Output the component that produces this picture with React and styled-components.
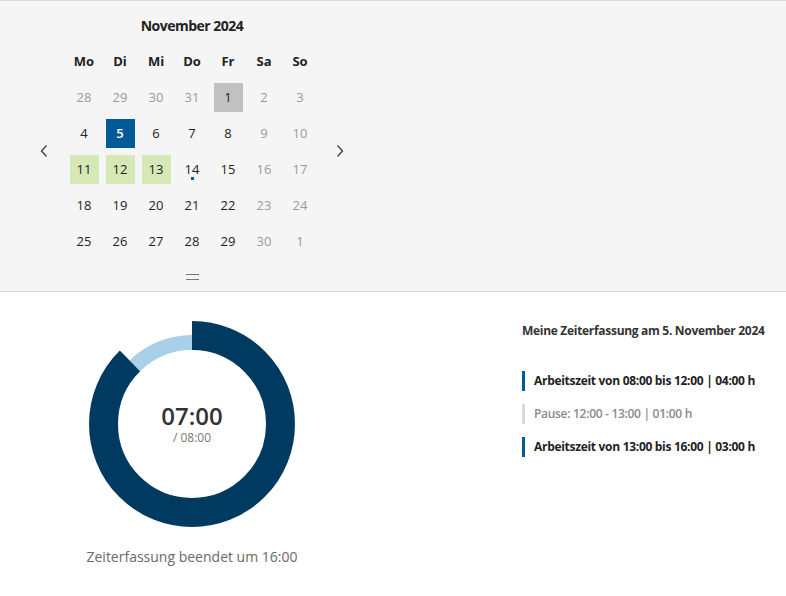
import React from 'react';
import styled, { createGlobalStyle } from 'styled-components';

const GlobalStyle = createGlobalStyle`
  html, body { margin: 0; padding: 0; background: #fff; }
  body { font-family: "Open Sans", "Noto Sans", sans-serif; color: #222; }
`;

const WEEKDAYS = ['Mo', 'Di', 'Mi', 'Do', 'Fr', 'Sa', 'So'];

// each day: [label, kind, mark] where kind is muted / normal and mark a highlight
const WEEKS = [
  [['28', 'muted'], ['29', 'muted'], ['30', 'muted'], ['31', 'muted'], ['1', 'normal', 'gray'], ['2', 'muted'], ['3', 'muted']],
  [['4', 'normal'], ['5', 'normal', 'selected'], ['6', 'normal'], ['7', 'normal'], ['8', 'normal'], ['9', 'muted'], ['10', 'muted']],
  [['11', 'normal', 'green'], ['12', 'normal', 'green'], ['13', 'normal', 'green'], ['14', 'normal', 'dot'], ['15', 'normal'], ['16', 'muted'], ['17', 'muted']],
  [['18', 'normal'], ['19', 'normal'], ['20', 'normal'], ['21', 'normal'], ['22', 'normal'], ['23', 'muted'], ['24', 'muted']],
  [['25', 'normal'], ['26', 'normal'], ['27', 'normal'], ['28', 'normal'], ['29', 'normal'], ['30', 'muted'], ['1', 'muted']],
];

const ENTRIES = [
  { text: 'Arbeitszeit von 08:00 bis 12:00 | 04:00 h', pause: false },
  { text: 'Pause: 12:00 - 13:00 | 01:00 h', pause: true },
  { text: 'Arbeitszeit von 13:00 bis 16:00 | 03:00 h', pause: false },
];

const Chevron = ({ dir }) => (
  <svg width="10" height="14" viewBox="0 0 10 14">
    <path
      d={dir === 'left' ? 'M7.5 1.5 L2.5 7 L7.5 12.5' : 'M2.5 1.5 L7.5 7 L2.5 12.5'}
      fill="none"
      stroke="#444"
      strokeWidth="1.4"
    />
  </svg>
);

const Donut = () => {
  const rDark = 88.5;
  const cDark = 2 * Math.PI * rDark;
  const rLight = 81.5;
  const cLight = 2 * Math.PI * rLight;
  return (
    <svg width="206" height="206" viewBox="0 0 206 206">
      <g transform="rotate(-90 103 103)">
        <circle
          cx="103" cy="103" r={rLight}
          fill="none" stroke="#a8d1e9" strokeWidth="15"
          strokeDasharray={`${cLight / 8} ${cLight}`}
          strokeDashoffset={-(cLight * 7) / 8}
        />
        <circle
          cx="103" cy="103" r={rDark}
          fill="none" stroke="#003a60" strokeWidth="29"
          strokeDasharray={`${(cDark * 7) / 8} ${cDark}`}
        />
      </g>
    </svg>
  );
};

export default function App() {
  return (
    <Page>
      <GlobalStyle />
      <CalendarPanel>
        <CalendarColumn>
          <MonthTitle>November 2024</MonthTitle>
          <CalendarRow>
            <NavButton aria-label="Vorheriger Monat"><Chevron dir="left" /></NavButton>
            <Grid>
              {WEEKDAYS.map((d) => (
                <WeekdayCell key={d}>{d}</WeekdayCell>
              ))}
              {WEEKS.flat().map(([label, kind, mark], i) => (
                <DayCell key={i}>
                  <DayBox $kind={kind} $mark={mark}>
                    {label}
                    {mark === 'dot' && <Dot />}
                  </DayBox>
                </DayCell>
              ))}
            </Grid>
            <NavButton aria-label="Nächster Monat"><Chevron dir="right" /></NavButton>
          </CalendarRow>
          <Handle />
        </CalendarColumn>
      </CalendarPanel>

      <Summary>
        <ChartColumn>
          <ChartWrap>
            <Donut />
            <ChartCenter>
              <Worked>07:00</Worked>
              <Target>/ 08:00</Target>
            </ChartCenter>
          </ChartWrap>
          <Caption>Zeiterfassung beendet um 16:00</Caption>
        </ChartColumn>

        <EntryColumn>
          <EntryTitle>Meine Zeiterfassung am 5. November 2024</EntryTitle>
          <EntryList>
            {ENTRIES.map((e) => (
              <Entry key={e.text} $pause={e.pause}>{e.text}</Entry>
            ))}
          </EntryList>
        </EntryColumn>
      </Summary>
    </Page>
  );
}

const Page = styled.div`
  width: 786px;
  min-height: 596px;
  display: flex;
  flex-direction: column;
`;

const CalendarPanel = styled.section`
  background: #f5f5f5;
  border-top: 1px solid #dcdcdc;
  border-bottom: 1px solid #d6d6d6;
  height: 290px;
`;

const CalendarColumn = styled.div`
  width: 384px;
  display: flex;
  flex-direction: column;
  align-items: center;
`;

const MonthTitle = styled.div`
  font-size: 14px;
  font-weight: 700;
  letter-spacing: -0.5px;
  color: #222;
  line-height: 20px;
  margin-top: 15px;
  height: 27px;
`;

const CalendarRow = styled.div`
  display: flex;
  align-items: center;
  gap: 10px;
`;

const NavButton = styled.button`
  width: 24px;
  height: 24px;
  border: none;
  background: transparent;
  padding: 0;
  display: flex;
  align-items: center;
  justify-content: center;
  cursor: pointer;
`;

const Grid = styled.div`
  display: grid;
  grid-template-columns: repeat(7, 36px);
  grid-auto-rows: 36px;
`;

const WeekdayCell = styled.div`
  display: flex;
  align-items: center;
  justify-content: center;
  font-size: 13px;
  font-weight: 700;
  color: #222;
`;

const DayCell = styled.div`
  display: flex;
  align-items: center;
  justify-content: center;
`;

const markBg = {
  gray: '#c1c1c1',
  selected: '#005a97',
  green: '#d5e8b5',
};

const DayBox = styled.div`
  position: relative;
  width: 29px;
  height: 29px;
  display: flex;
  align-items: center;
  justify-content: center;
  font-size: 13px;
  background: ${(p) => markBg[p.$mark] || 'transparent'};
  color: ${(p) => (p.$mark === 'selected' ? '#fff' : p.$kind === 'muted' ? '#9a9a9a' : '#222')};
  font-weight: ${(p) => (p.$mark === 'selected' ? 600 : 400)};
`;

const Dot = styled.span`
  position: absolute;
  left: 13px;
  bottom: 4px;
  width: 3px;
  height: 3px;
  background: #005a97;
`;

const Handle = styled.div`
  width: 13px;
  height: 4px;
  border-top: 1.5px solid #777;
  border-bottom: 1.5px solid #777;
  margin-top: 15px;
`;

const Summary = styled.section`
  display: flex;
`;

const ChartColumn = styled.div`
  width: 384px;
  display: flex;
  flex-direction: column;
  align-items: center;
  padding-top: 29px;
`;

const ChartWrap = styled.div`
  position: relative;
  width: 206px;
  height: 206px;
`;

const ChartCenter = styled.div`
  position: absolute;
  inset: 0;
  display: flex;
  flex-direction: column;
  align-items: center;
  justify-content: center;
  gap: 2px;
`;

const Worked = styled.div`
  font-size: 24px;
  font-weight: 600;
  color: #333;
  line-height: 26px;
`;

const Target = styled.div`
  font-size: 12px;
  color: #777;
  line-height: 14px;
`;

const Caption = styled.div`
  margin-top: 20px;
  font-size: 14px;
  color: #6e6868;
`;

const EntryColumn = styled.div`
  padding-left: 138px;
  padding-top: 30px;
`;

const EntryTitle = styled.div`
  font-size: 12px;
  font-weight: 700;
  letter-spacing: -0.3px;
  color: #333;
  line-height: 18px;
`;

const EntryList = styled.div`
  margin-top: 31px;
  display: flex;
  flex-direction: column;
  gap: 13px;
`;

const Entry = styled.div`
  border-left: 3px solid ${(p) => (p.$pause ? '#dadada' : '#005a97')};
  padding-left: 9px;
  font-size: 12px;
  letter-spacing: -0.3px;
  font-weight: ${(p) => (p.$pause ? 600 : 700)};
  color: ${(p) => (p.$pause ? '#8a8a8a' : '#222')};
  line-height: 20px;
`;
